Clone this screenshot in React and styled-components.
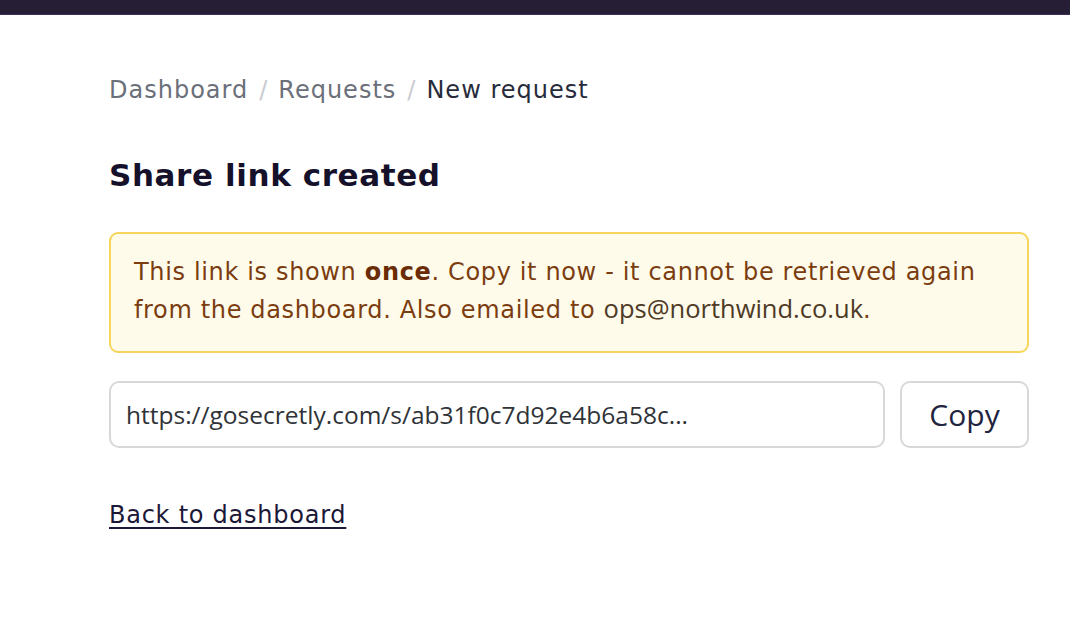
import React from 'react'
import styled, { createGlobalStyle } from 'styled-components'

const Global = createGlobalStyle`
  html, body { margin: 0; padding: 0; background: #ffffff; }
  body { font-family: "DejaVu Sans", "Noto Sans", sans-serif; color: #1b1730; }
`

const TopBar = styled.header`
  height: 14px;
  background: #251e35;
  border-bottom: 1px solid #3b2f5e;
`

const Page = styled.main`
  width: 920px;
  margin-left: 109px;
  padding-top: 60px;
`

const Crumbs = styled.nav`
  display: flex;
  align-items: center;
  gap: 11px;
  font-size: 24px;
  line-height: 30px;
  letter-spacing: 1px;
`

const Crumb = styled.span`
  color: ${p => (p.$current ? '#272b3b' : '#6b6f7a')};
`

const Sep = styled.span`
  color: #c9cbd1;
  letter-spacing: 0;
`

const Title = styled.h1`
  margin: 50px 0 0;
  font-size: 31px;
  line-height: 40px;
  letter-spacing: 0.6px;
  font-weight: 700;
  color: #15112b;
`

const Notice = styled.div`
  margin-top: 37px;
  padding: 20px 23px 23px;
  background: #fffbea;
  border: 2px solid #f6d55c;
  border-radius: 9px;
  color: #7b3d10;
  font-size: 24px;
  line-height: 36px;
  letter-spacing: 0.65px;
  b { font-weight: 700; color: #6a2b06; }
`

const Email = styled.span`
  font-family: "Open Sans", sans-serif;
  font-size: 25.5px;
  letter-spacing: 0;
  color: #4d3a26;
`

const LinkRow = styled.div`
  display: flex;
  gap: 15px;
  margin-top: 28px;
`

const UrlField = styled.div`
  flex: 1;
  height: 63px;
  display: flex;
  align-items: center;
  padding: 0 15px;
  border: 2px solid #d8d8da;
  border-radius: 10px;
  font-family: "Open Sans", sans-serif;
  font-size: 24.5px;
  color: #2f3338;
  white-space: nowrap;
  overflow: hidden;
`

const CopyButton = styled.button`
  width: 129px;
  height: 67px;
  background: #ffffff;
  border: 2px solid #d8d8da;
  border-radius: 10px;
  font-family: "Open Sans", sans-serif;
  font-size: 30px;
  color: #1f2440;
  cursor: pointer;
`

const BackLink = styled.a`
  display: inline-block;
  margin-top: 53px;
  font-size: 24px;
  letter-spacing: 0.75px;
  color: #1c1838;
  text-decoration: underline;
  text-underline-offset: 4px;
  text-decoration-thickness: 2px;
`

export default function App() {
  return (
    <>
      <Global />
      <TopBar />
      <Page>
        <Crumbs>
          <Crumb>Dashboard</Crumb>
          <Sep>/</Sep>
          <Crumb>Requests</Crumb>
          <Sep>/</Sep>
          <Crumb $current>New request</Crumb>
        </Crumbs>
        <Title>Share link created</Title>
        <Notice>
          This link is shown <b>once</b>. Copy it now - it cannot be retrieved again
          from the dashboard. Also emailed to <Email>ops@northwind.co.uk</Email>.
        </Notice>
        <LinkRow>
          <UrlField>https://gosecretly.com/s/ab31f0c7d92e4b6a58c...</UrlField>
          <CopyButton>Copy</CopyButton>
        </LinkRow>
        <BackLink href="#">Back to dashboard</BackLink>
      </Page>
    </>
  )
}
